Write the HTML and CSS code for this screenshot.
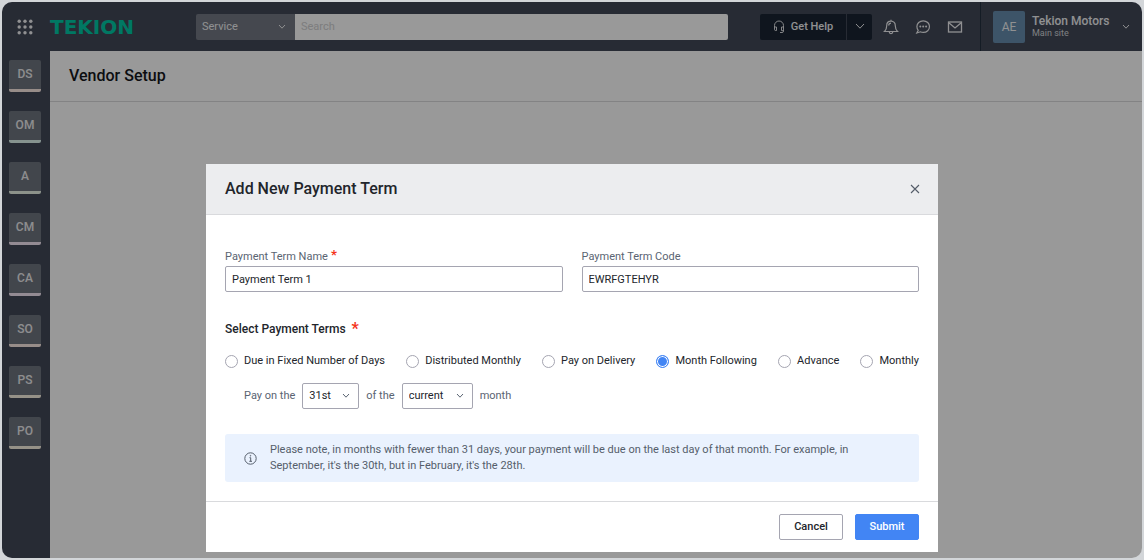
FILE: index.html
```html
<!DOCTYPE html>
<html lang="en">
<head>
<meta charset="utf-8">
<title>Vendor Setup</title>
<link rel="stylesheet" href="styles.css">
</head>
<body>
<div class="app">
  <header class="topbar">
    <button class="icon-btn apps" aria-label="Apps">
      <svg width="16" height="16" viewBox="0 0 16 16" fill="currentColor"><circle cx="2.200" cy="2.200" r="1.700"/><circle cx="8" cy="2.200" r="1.700"/><circle cx="13.800" cy="2.200" r="1.700"/><circle cx="2.200" cy="8" r="1.700"/><circle cx="8" cy="8" r="1.700"/><circle cx="13.800" cy="8" r="1.700"/><circle cx="2.200" cy="13.800" r="1.700"/><circle cx="8" cy="13.800" r="1.700"/><circle cx="13.800" cy="13.800" r="1.700"/></svg>
    </button>
    <a class="logo" href="#">TEKION</a>
    <div class="search">
      <span class="select scope">
        <select aria-label="Search scope"><option>Service</option></select>
        <svg class="chev" width="8" height="6" viewBox="0 0 8 6"><path d="M1 1l3 3.200L7 1"/></svg>
      </span>
      <input class="search-input" type="text" placeholder="Search" aria-label="Search">
    </div>
    <div class="help">
      <button class="help-main">
        <svg width="12" height="14" viewBox="0 0 12 14" fill="none" stroke="currentColor" stroke-width=".9"><path d="M1.500 7V5.500a4.500 4.500 0 0 1 9 0V7"/><path d="M1.500 7h2v3.500H2.300a1 1 0 0 1-.8-1zM10.500 7h-2v3.500h1.200a1 1 0 0 0 .8-1zM10.500 9.500v1.500a1.500 1.500 0 0 1-1.500 1.500H7"/></svg>
        Get Help
      </button>
      <button class="help-more" aria-label="More help">
        <svg class="chev" width="10" height="7" viewBox="0 0 10 7"><path d="M1 1l4 4.200L9 1"/></svg>
      </button>
    </div>
    <div class="tools">
      <button class="icon-btn" aria-label="Notifications">
        <svg width="16" height="16" viewBox="0 0 16 16" fill="none" stroke="currentColor" stroke-width="1.200"><path d="M8 2.200c-2.700 0-4.300 2-4.300 4.500 0 3-.7 4.400-2.200 5.800h13c-1.500-1.400-2.200-2.800-2.200-5.800 0-2.500-1.600-4.500-4.300-4.500zM8 2.200V.8M6.200 12.800a1.800 1.800 0 0 0 3.600 0M5.700 6.600c0-1.400.8-2.400 2.300-2.500"/></svg>
      </button>
      <button class="icon-btn" aria-label="Messages">
        <svg width="16" height="16" viewBox="0 0 16 16"><path fill="none" stroke="currentColor" stroke-width="1.200" d="M8.200 1.800c3.700 0 6.300 2.600 6.300 5.800s-2.600 5.800-6.300 5.800c-1 0-2-.2-2.800-.6L1.800 14l1.400-2.700A5.500 5.500 0 0 1 1.900 7.600c0-3.200 2.600-5.800 6.300-5.800z"/><g fill="currentColor"><circle cx="5.300" cy="7.500" r="1"/><circle cx="8.200" cy="7.500" r="1"/><circle cx="11.100" cy="7.500" r="1"/></g></svg>
      </button>
      <button class="icon-btn" aria-label="Mail">
        <svg width="16" height="16" viewBox="0 0 16 16" fill="none" stroke="currentColor" stroke-width="1.300"><rect x="1.500" y="3" width="13" height="10"/><path d="M1.500 3.500L8 9l6.500-5.500"/></svg>
      </button>
    </div>
    <button class="account">
      <span class="avatar">AE</span>
      <span class="who"><span class="org">Tekion Motors</span><span class="site">Main site</span></span>
      <svg class="chev" width="8" height="6" viewBox="0 0 8 6"><path d="M1 1l3 3.200L7 1"/></svg>
    </button>
  </header>
  <div class="body">
    <nav class="rail">
      <a class="tile peach" href="#">DS</a>
      <a class="tile mint" href="#">OM</a>
      <a class="tile sage" href="#">A</a>
      <a class="tile lilac" href="#">CM</a>
      <a class="tile lilac" href="#">CA</a>
      <a class="tile peach" href="#">SO</a>
      <a class="tile sand" href="#">PS</a>
      <a class="tile sand" href="#">PO</a>
    </nav>
    <main class="page"><h1 class="page-title">Vendor Setup</h1></main>
  </div>
  <div class="overlay">
    <form class="modal" role="dialog" aria-labelledby="dlg-title">
      <div class="modal-head">
        <h2 class="modal-title" id="dlg-title">Add New Payment Term</h2>
        <button class="close" type="button" aria-label="Close"><svg width="10" height="10" viewBox="0 0 10 10" fill="none" stroke="currentColor" stroke-width="1.100"><path d="M1 1l8 8M9 1L1 9"/></svg></button>
      </div>
      <div class="modal-body">
        <div class="fields">
          <div class="field">
            <label for="name">Payment Term Name<span class="req">*</span></label>
            <input id="name" type="text" value="Payment Term 1">
          </div>
          <div class="field">
            <label for="code">Payment Term Code</label>
            <input id="code" type="text" value="EWRFGTEHYR">
          </div>
        </div>
        <fieldset class="terms">
          <legend>Select Payment Terms <span class="req big">*</span></legend>
          <div class="options">
            <label><input type="radio" name="term">Due in Fixed Number of Days</label>
            <label><input type="radio" name="term">Distributed Monthly</label>
            <label><input type="radio" name="term">Pay on Delivery</label>
            <label><input type="radio" name="term" checked>Month Following</label>
            <label><input type="radio" name="term">Advance</label>
            <label><input type="radio" name="term">Monthly</label>
          </div>
        </fieldset>
        <div class="schedule">
          <label for="day">Pay on the</label>
          <span class="select day"><select id="day"><option>31st</option></select><svg class="chev" width="8" height="6" viewBox="0 0 8 6"><path d="M1 1l3 3.200L7 1"/></svg></span>
          <label for="month">of the</label>
          <span class="select month"><select id="month"><option>current</option></select><svg class="chev" width="8" height="6" viewBox="0 0 8 6"><path d="M1 1l3 3.200L7 1"/></svg></span>
          <span>month</span>
        </div>
        <div class="note">
          <svg width="13" height="13" viewBox="0 0 13 13" fill="none" stroke="currentColor"><circle cx="6.500" cy="6.500" r="5.700"/><path d="M5.500 5.700h1.200v3.600M5.300 9.300h2.700"/><circle cx="6.500" cy="3.700" r=".5" fill="currentColor" stroke-width=".4"/></svg>
          <p>Please note, in months with fewer than 31 days, your payment will be due on the last day of that month. For example, in September, it's the 30th, but in February, it's the 28th.</p>
        </div>
      </div>
      <div class="modal-foot">
        <button class="btn" type="button">Cancel</button>
        <button class="btn primary" type="submit">Submit</button>
      </div>
    </form>
  </div>
</div>
</body>
</html>
```
FILE: styles.css
```css
* { box-sizing: border-box; }
body {
  margin: 0;
  padding: 2px;
  min-height: 100vh;
  display: flex;
  background: #d3d6d9;
  font: 11px/16px Roboto, Inter, sans-serif;
  color: #22252b;
}
button, input, select { font: inherit; color: inherit; margin: 0; }
button { border: 0; padding: 0; background: none; }
a { color: inherit; text-decoration: none; }
h1, h2, p { margin: 0; }
svg { flex: none; display: block; }
.chev { fill: none; stroke: currentColor; stroke-width: 1; }

.app {
  position: relative;
  flex: 1;
  display: flex;
  flex-direction: column;
  border-radius: 10px;
  overflow: hidden;
  background: #fff;
}

/* Top bar */
.topbar {
  display: flex;
  align-items: center;
  height: 49px;
  padding-left: 15px;
  background: #424958;
  color: #f0f1f3;
}
.icon-btn { display: flex; }
.logo {
  margin-left: 17px;
  width: 97px;
  font: bold 20px/24px "DejaVu Sans", sans-serif;
  color: #00c8a6;
}
.search {
  flex: 1;
  display: flex;
  height: 26px;
  margin-left: 49px;
  border-radius: 2px;
  overflow: hidden;
}
.search-input {
  flex: 1;
  min-width: 0;
  border: 0;
  padding: 0 6px;
  background: #fff;
}
.search-input::placeholder { color: #d0d0d2; opacity: 1; }

.select { display: grid; align-items: center; }
.select select {
  grid-area: 1 / 1;
  appearance: none;
  width: 100%;
  height: 26px;
  border: 1px solid #a5a5b1;
  border-radius: 2px;
  padding: 0 6px;
  background: #fff;
}
.select .chev { grid-area: 1 / 1; justify-self: end; margin-right: 9px; pointer-events: none; }
.scope { width: 99px; }
.scope select { border: 0; border-radius: 0; background: #747984; color: #f0f1f3; }

.help { display: flex; gap: 1px; margin-left: 32px; height: 26px; }
.help-main, .help-more {
  display: flex;
  align-items: center;
  justify-content: center;
  background: #192433;
  font-weight: 500;
}
.help-main { width: 86px; gap: 6px; border-radius: 2px 0 0 2px; }
.help-more { width: 25px; border-radius: 0 2px 2px 0; }
.tools { display: flex; gap: 16px; padding: 0 17px 0 11px; }
.account {
  display: flex;
  align-items: center;
  align-self: stretch;
  width: 162px;
  padding: 0 12px;
  gap: 7px;
  border-left: 1px solid #222f3f;
  text-align: left;
}
.avatar {
  width: 32px;
  line-height: 32px;
  border-radius: 2px;
  background: #668dae;
  font-size: 12px;
  text-align: center;
}
.who { flex: 1; display: flex; flex-direction: column; white-space: nowrap; }
.org { font-size: 12px; line-height: 13px; font-weight: 500; }
.site { font-size: 9px; line-height: 11px; color: #d3d5d8; }

/* Side rail and page */
.body { flex: 1; display: flex; }
.rail {
  width: 48px;
  padding: 9px 9px 9px 7px;
  display: flex;
  flex-direction: column;
  gap: 19px;
  background: #424958;
}
.tile {
  height: 32px;
  border-radius: 2px;
  border-bottom: 3px solid;
  background: #6f757f;
  text-align: center;
  font-size: 12px;
  line-height: 29px;
  font-weight: 500;
  color: #ececee;
}
.peach { border-color: #fcebe5; }
.mint { border-color: #e0f5ef; }
.sage { border-color: #e9f3e7; }
.lilac { border-color: #f5e8f6; }
.sand { border-color: #fbf4e3; }
.page { flex: 1; }
.page-title {
  padding: 0 19px;
  border-bottom: 1px solid #dadadc;
  font-size: 16px;
  line-height: 50px;
  font-weight: 500;
  color: #15171b;
}

/* Dialog */
.overlay {
  position: absolute;
  inset: 0;
  display: flex;
  justify-content: center;
  align-items: flex-start;
  padding: 162px 16px 6px;
  background: rgba(0, 0, 0, .4);
}
.modal { width: 100%; max-width: 732px; background: #fff; }
.modal-head {
  display: flex;
  align-items: center;
  justify-content: space-between;
  height: 51px;
  padding: 0 18px 0 19px;
  background: #ecedef;
  border-bottom: 1px solid #d9dadd;
}
.modal-title { font-size: 16px; line-height: 20px; font-weight: 500; }
.close { color: #555d69; }
.modal-body { padding: 34px 19px 19px; }
.fields { display: grid; grid-template-columns: 1fr 1fr; gap: 19px; }
.field { display: flex; flex-direction: column; gap: 1px; }
.field label { color: #5a6472; }
.req {
  margin-left: 3px;
  color: #f5341b;
  font-size: 13px;
  line-height: 12px;
  font-weight: 700;
  vertical-align: top;
}
.field input {
  height: 26px;
  border: 1px solid #a5a5b1;
  border-radius: 2px;
  padding: 0 6px;
}
.terms { border: 0; margin: 29px 0 0; padding: 0; }
.terms legend { padding: 0; font-size: 12px; font-weight: 500; }
.req.big { font-size: 16px; line-height: 16px; }
.options {
  display: flex;
  justify-content: space-between;
  margin-top: 16px;
  white-space: nowrap;
}
.options label { display: flex; align-items: center; gap: 6px; }
.options input {
  appearance: none;
  width: 13px;
  height: 13px;
  border: 1px solid #a5a5b1;
  border-radius: 50%;
  background: #fff;
}
.options input:checked {
  border-color: #4285f4;
  background: #4285f4;
  box-shadow: inset 0 0 0 1px #fff;
}
.schedule {
  display: flex;
  align-items: center;
  gap: 7px;
  margin: 14px 0 25px;
  padding-left: 19px;
  color: #5a6472;
}
.schedule select { color: #22252b; }
.day { width: 57px; }
.month { width: 71px; }
.schedule .chev { color: #5a6472; }
.note {
  display: flex;
  align-items: center;
  gap: 13px;
  padding: 8px 19px;
  border-radius: 3px;
  background: #eaf2fe;
  color: #555e6b;
}
.note p { max-width: 600px; }
.modal-foot {
  display: flex;
  justify-content: flex-end;
  gap: 12px;
  padding: 12px 19px;
  border-top: 1px solid #d9dadd;
}
.btn {
  width: 64px;
  height: 26px;
  border: 1px solid #a5a5b1;
  border-radius: 2px;
  background: #fff;
  font-weight: 500;
}
.primary { border-color: #4285f4; background: #4285f4; color: #fff; }
```
